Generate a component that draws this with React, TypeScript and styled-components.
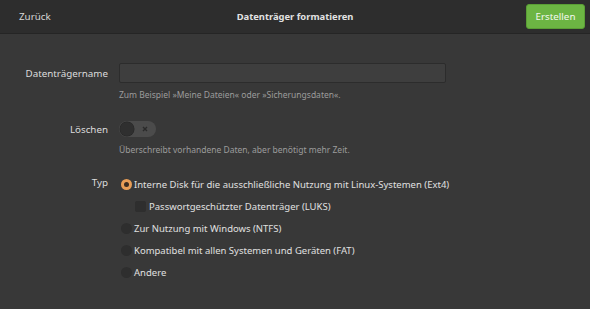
import React from 'react';
import styled, { createGlobalStyle } from 'styled-components';

const GlobalStyle = createGlobalStyle`
  html, body {
    margin: 0;
    padding: 0;
    background: #383838;
  }
  body {
    font-family: 'Noto Sans', 'DejaVu Sans', sans-serif;
    color: #e6e6e6;
  }
`;

const Window = styled.div`
  width: 590px;
  height: 309px;
  background: #383838;
  overflow: hidden;
`;

const HeaderBar = styled.header`
  height: 33px;
  background: #2d2d2d;
  border-bottom: 1px solid #252525;
  display: flex;
  align-items: center;
  justify-content: space-between;
  padding: 0 5px 0 19px;
  position: relative;
`;

const BackLink = styled.span`
  font-size: 9.8px;
  color: #d8d8d8;
`;

const Title = styled.h1`
  position: absolute;
  left: 0;
  right: 0;
  text-align: center;
  margin: 0;
  font-size: 9.4px;
  font-weight: 700;
  color: #e2e2e2;
  pointer-events: none;
`;

const CreateButton = styled.button`
  height: 25px;
  width: 59px;
  border: 1px solid #5a9e35;
  border-radius: 3px;
  background: #6cb543;
  color: #f4f8ef;
  font-family: inherit;
  font-size: 9.8px;
  padding: 0;
`;

const Form = styled.div`
  display: grid;
  grid-template-columns: 108px 1fr;
  column-gap: 11px;
  padding-top: 29px;
`;

const Label = styled.div<{ $top?: number }>`
  text-align: right;
  font-size: 9.8px;
  color: #dcdcdc;
  padding-top: ${(p) => p.$top ?? 0}px;
`;

const Field = styled.div`
  display: flex;
  flex-direction: column;
  align-items: flex-start;
`;

const TextInput = styled.input`
  width: 327px;
  height: 20px;
  box-sizing: border-box;
  background: #3e3e3e;
  border: 1px solid #2c2c2c;
  border-radius: 2px;
  outline: none;
  color: #ddd;
`;

const Hint = styled.div<{ $gap: number }>`
  margin-top: ${(p) => p.$gap}px;
  font-size: 8.5px;
  color: #9c9c9c;
`;

const Section = styled.div<{ $mt: number }>`
  display: contents;
  & > * {
    margin-top: ${(p) => p.$mt}px;
  }
`;

const Switch = styled.div`
  width: 37px;
  height: 16px;
  border-radius: 8px;
  background: #4b4b4b;
  display: flex;
  align-items: center;
  justify-content: space-between;
  padding: 0 8px 0 1px;
  box-sizing: border-box;
`;

const Knob = styled.div`
  width: 14px;
  height: 14px;
  border-radius: 50%;
  background: #2f2f2f;
  box-shadow: 0 0 0 0.5px #262626;
`;

const Options = styled.div`
  display: flex;
  flex-direction: column;
`;

const OptionRow = styled.label<{ $indent?: boolean }>`
  display: flex;
  align-items: center;
  height: 22px;
  font-size: 9.5px;
  color: #e0e0e0;
  padding-left: ${(p) => (p.$indent ? 16 : 2)}px;
  gap: 2px;
`;

const Radio = styled.span<{ $checked?: boolean }>`
  width: 11px;
  height: 11px;
  border-radius: 50%;
  box-sizing: border-box;
  background: ${(p) => (p.$checked ? '#e89e57' : '#2e2e2e')};
  display: flex;
  align-items: center;
  justify-content: center;
  &::after {
    content: '';
    display: ${(p) => (p.$checked ? 'block' : 'none')};
    width: 5px;
    height: 5px;
    border-radius: 50%;
    background: #3a2d22;
  }
`;

const Check = styled.span`
  width: 11px;
  height: 11px;
  border-radius: 2px;
  background: #2e2e2e;
  margin-right: 1px;
`;

export default function App() {
  return (
    <Window>
      <GlobalStyle />
      <HeaderBar>
        <BackLink>Zurück</BackLink>
        <Title>Datenträger formatieren</Title>
        <CreateButton>Erstellen</CreateButton>
      </HeaderBar>
      <Form>
        <Label $top={4}>Datenträgername</Label>
        <Field>
          <TextInput />
          <Hint $gap={6}>Zum Beispiel »Meine Dateien« oder »Sicherungsdaten«.</Hint>
        </Field>

        <Section $mt={21}>
          <Label $top={2}>Löschen</Label>
          <Field>
            <Switch>
              <Knob />
              <svg width="6" height="6" viewBox="0 0 6 6">
                <path d="M1 1L5 5M5 1L1 5" stroke="#2a2a2a" strokeWidth="1.4" />
              </svg>
            </Switch>
            <Hint $gap={7}>Überschreibt vorhandene Daten, aber benötigt mehr Zeit.</Hint>
          </Field>
        </Section>

        <Section $mt={18}>
          <Label $top={3}>Typ</Label>
          <Options>
            <OptionRow>
              <Radio $checked />
              Interne Disk für die ausschließliche Nutzung mit Linux-Systemen (Ext4)
            </OptionRow>
            <OptionRow $indent>
              <Check />
              Passwortgeschützter Datenträger (LUKS)
            </OptionRow>
            <OptionRow>
              <Radio />
              Zur Nutzung mit Windows (NTFS)
            </OptionRow>
            <OptionRow>
              <Radio />
              Kompatibel mit allen Systemen und Geräten (FAT)
            </OptionRow>
            <OptionRow>
              <Radio />
              Andere
            </OptionRow>
          </Options>
        </Section>
      </Form>
    </Window>
  );
}
